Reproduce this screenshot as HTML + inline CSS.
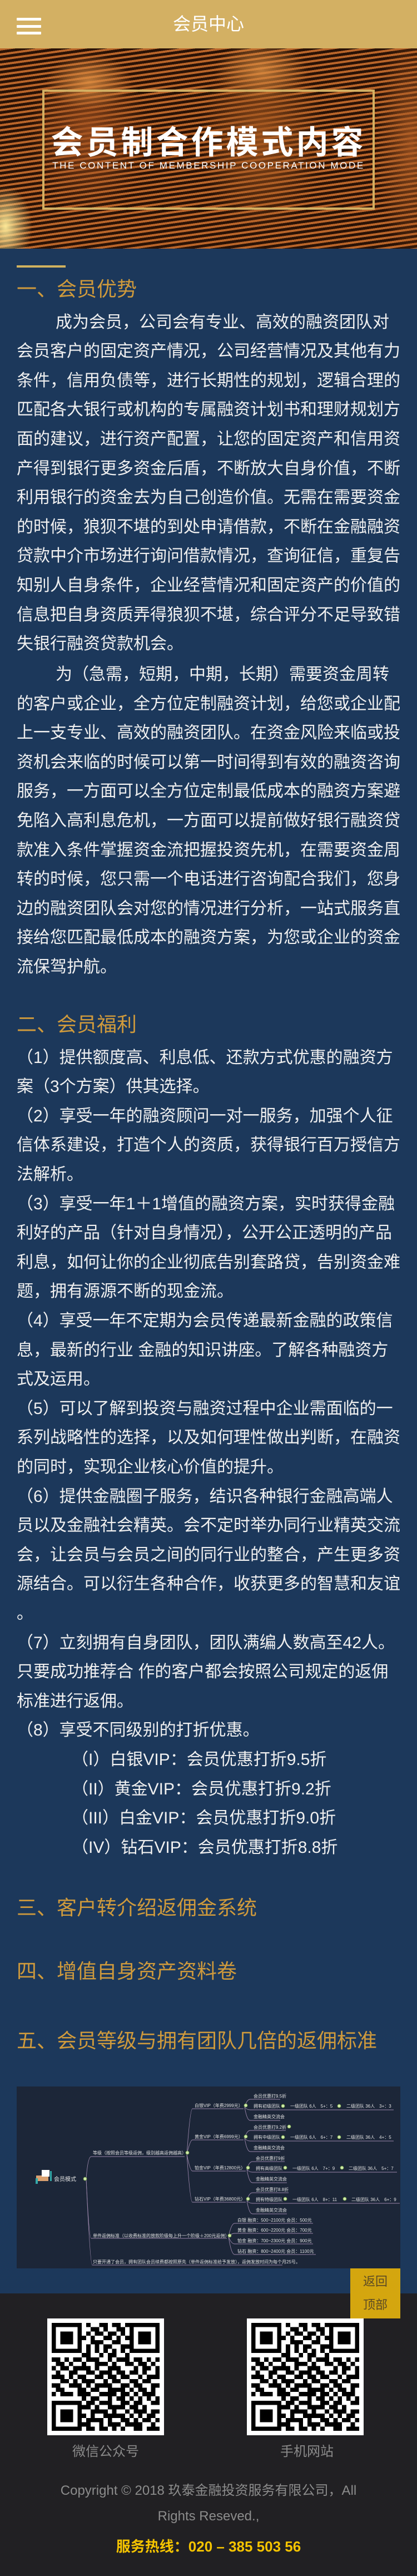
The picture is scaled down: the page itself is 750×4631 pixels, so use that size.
<!DOCTYPE html>
<html><head><meta charset="utf-8">
<style>
*{margin:0;padding:0;box-sizing:border-box}
html,body{width:750px;height:4631px;overflow:hidden;background:#1c385b;font-family:"Liberation Sans","Noto Sans CJK SC",sans-serif}
.hdr{position:absolute;left:0;top:0;width:750px;height:87px;background:#d3b063}
.hdr .t{position:absolute;left:0;width:750px;top:0;line-height:87px;text-align:center;color:#fff;font-size:32px}
.hb{position:absolute;left:30px;width:44px;height:5px;background:#fff;border-radius:1px}
.ban{position:absolute;left:0;top:87px;width:750px;height:360px;overflow:hidden;
background:
radial-gradient(ellipse 110px 70px at 160px 60px,rgba(230,150,70,.75),rgba(0,0,0,0) 70%),
radial-gradient(ellipse 120px 80px at 470px 40px,rgba(230,150,70,.7),rgba(0,0,0,0) 70%),
radial-gradient(ellipse 140px 200px at 160px 150px,rgba(160,80,30,.8),rgba(0,0,0,0) 75%),
radial-gradient(ellipse 150px 230px at 470px 160px,rgba(160,85,30,.85),rgba(0,0,0,0) 75%),
radial-gradient(ellipse 60px 90px at 10px 320px,rgba(250,230,150,1),rgba(0,0,0,0) 80%),
radial-gradient(ellipse 80px 260px at 740px 170px,rgba(170,90,35,.8),rgba(0,0,0,0) 80%),
repeating-linear-gradient(172deg,#b9652a 0 4px,#2a1206 4px 9px);}
.ban .frame{position:absolute;left:76px;top:74px;width:598px;height:216px;border:4px solid #d3b063}
.ban .tt{position:absolute;left:0;width:750px;top:135px;text-align:center;color:#fff;font-size:58px;font-weight:bold;letter-spacing:5px;line-height:70px}
.ban .st{position:absolute;left:0;width:750px;top:200px;text-align:center;color:#fff;font-size:17px;letter-spacing:2.6px;line-height:22px}
.gl{position:absolute;left:30px;top:477px;width:88px;height:4px;background:#d1b25f}
.h{position:absolute;left:30px;color:#cf9a3c;font-size:36px;line-height:50px;white-space:nowrap}
.p{position:absolute;left:30px;width:700px;color:#f0f0f0;font-size:30px;line-height:52.6px;white-space:nowrap}
.ind{padding-left:70px}
.vip{padding-left:99px}
.img{position:absolute;left:30px;top:3751px;width:690px;height:327px;background:#1c2638}
.foot{position:absolute;left:0;top:4123px;width:750px;height:508px;background:#212023}
.top{position:absolute;left:630px;top:4078px;width:90px;height:90px;background:#d4a60f;color:#5b4a25;font-size:22px;line-height:42px;text-align:center;padding-top:3px}
.qr{position:absolute;top:4168px;width:210px;height:210px}
.lab{position:absolute;top:4390px;width:300px;text-align:center;color:#8a8a8a;font-size:24px;line-height:36px}
.cp{position:absolute;left:0;width:750px;text-align:center;color:#8c8c8c;font-size:24px;line-height:46px;top:4455px}
.hot{position:absolute;left:0;width:750px;text-align:center;color:#f5c400;font-size:26px;line-height:40px;top:4558px;font-weight:bold}
</style></head><body>
<div class="hdr"><div class="hb" style="top:32px"></div><div class="hb" style="top:45px"></div><div class="hb" style="top:57px"></div><div class="t">会员中心</div></div>
<div class="ban"><div class="frame"></div><div class="tt">会员制合作模式内容</div><div class="st">THE CONTENT OF MEMBERSHIP COOPERATION MODE</div></div>
<div class="gl"></div>
<div class="h" style="top:495px">一、会员优势</div>
<div class="p" style="top:553.7px"><div class="ind">成为会员，公司会有专业、高效的融资团队对</div>会员客户的固定资产情况，公司经营情况及其他有力<br>条件，信用负债等，进行长期性的规划，逻辑合理的<br>匹配各大银行或机构的专属融资计划书和理财规划方<br>面的建议，进行资产配置，让您的固定资产和信用资<br>产得到银行更多资金后盾，不断放大自身价值，不断<br>利用银行的资金去为自己创造价值。无需在需要资金<br>的时候，狼狈不堪的到处申请借款，不断在金融融资<br>贷款中介市场进行询问借款情况，查询征信，重复告<br>知别人自身条件，企业经营情况和固定资产的价值的<br>信息把自身资质弄得狼狈不堪，综合评分不足导致错<br>失银行融资贷款机会。</div>
<div class="p" style="top:1187px"><div class="ind">为（急需，短期，中期，长期）需要资金周转</div>的客户或企业，全方位定制融资计划，给您或企业配<br>上一支专业、高效的融资团队。在资金风险来临或投<br>资机会来临的时候可以第一时间得到有效的融资咨询<br>服务，一方面可以全方位定制最低成本的融资方案避<br>免陷入高利息危机，一方面可以提前做好银行融资贷<br>款准入条件掌握资金流把握投资先机，在需要资金周<br>转的时候，您只需一个电话进行咨询配合我们，您身<br>边的融资团队会对您的情况进行分析，一站式服务直<br>接给您匹配最低成本的融资方案，为您或企业的资金<br>流保驾护航。</div>
<div class="h" style="top:1817px">二、会员福利</div>
<div class="p" style="top:1875.7px">（1）提供额度高、利息低、还款方式优惠的融资方<br>案（3个方案）供其选择。<br>（2）享受一年的融资顾问一对一服务，加强个人征<br>信体系建设，打造个人的资质，获得银行百万授信方<br>法解析。<br>（3）享受一年1＋1增值的融资方案，实时获得金融<br>利好的产品（针对自身情况），公开公正透明的产品<br>利息，如何让你的企业彻底告别套路贷，告别资金难<br>题，拥有源源不断的现金流。<br>（4）享受一年不定期为会员传递最新金融的政策信<br>息，最新的行业 金融的知识讲座。了解各种融资方<br>式及运用。<br>（5）可以了解到投资与融资过程中企业需面临的一<br>系列战略性的选择，以及如何理性做出判断，在融资<br>的同时，实现企业核心价值的提升。<br>（6）提供金融圈子服务，结识各种银行金融高端人<br>员以及金融社会精英。会不定时举办同行业精英交流<br>会，让会员与会员之间的同行业的整合，产生更多资<br>源结合。可以衍生各种合作，收获更多的智慧和友谊<br>。<br>（7）立刻拥有自身团队，团队满编人数高至42人。<br>只要成功推荐合 作的客户都会按照公司规定的返佣<br>标准进行返佣。<br>（8）享受不同级别的打折优惠。
<div class="vip">（I）白银VIP：会员优惠打折9.5折<br>（II）黄金VIP：会员优惠打折9.2折<br>（III）白金VIP：会员优惠打折9.0折<br>（IV）钻石VIP：会员优惠打折8.8折</div></div>
<div class="h" style="top:3405px">三、客户转介绍返佣金系统</div>
<div class="h" style="top:3519px">四、增值自身资产资料卷</div>
<div class="h" style="top:3644px">五、会员等级与拥有团队几倍的返佣标准</div>

<div class="img">
<svg width="690" height="327" viewBox="0 0 690 327" font-family="Liberation Sans,Noto Sans CJK SC,sans-serif" font-size="8" fill="#e2e2e2">
<g stroke="#9a86aa" stroke-width="0.9" fill="none">
<path d="M125 166 Q128 126 134 126 H302"/>
<path d="M125 166 Q130 273 134 273 H378"/>
<path d="M125 166 Q132 321 136 321 H478"/>
<path d="M306 122 Q312 40 316 40 H408"/>
<path d="M306 122 Q312 96 316 96 H408"/>
<path d="M306 122 Q312 152 316 152 H412"/>
<path d="M306 122 Q312 208 316 208 H412"/>
<path d="M410 37 Q414 23 420 23 H474"/><path d="M410 37 Q414 42 420 42 H678"/><path d="M410 37 Q414 61 420 61 H474"/>
<path d="M410 93 Q414 79 420 79 H484"/><path d="M410 93 Q414 98 420 98 H678"/><path d="M410 93 Q414 117 420 117 H474"/>
<path d="M414 149 Q418 135 424 135 H482"/><path d="M414 149 Q418 154 424 154 H684"/><path d="M414 149 Q418 173 424 173 H486"/>
<path d="M414 205 Q418 191 424 191 H489"/><path d="M414 205 Q418 210 424 210 H689"/><path d="M414 205 Q418 229 424 229 H486"/>
<path d="M381 270 Q386 246 392 246 H533"/><path d="M381 270 Q386 264 392 264 H533"/><path d="M381 270 Q386 283 392 283 H533"/><path d="M381 270 Q386 302 392 302 H538"/>
</g>
<g fill="#cfe8a8" stroke="#6a9a40" stroke-width="0.8">
<circle cx="123" cy="166" r="3"/><circle cx="307" cy="119" r="3"/><circle cx="383" cy="268" r="3"/>
<circle cx="412" cy="34" r="3"/><circle cx="479" cy="35" r="3"/><circle cx="580" cy="35" r="3"/>
<circle cx="412" cy="90" r="3"/><circle cx="490" cy="72" r="3"/><circle cx="479" cy="91" r="3"/><circle cx="580" cy="91" r="3"/>
<circle cx="416" cy="146" r="3"/><circle cx="483" cy="146" r="3"/><circle cx="585" cy="146" r="3"/>
<circle cx="416" cy="202" r="3"/><circle cx="483" cy="202" r="3"/><circle cx="590" cy="202" r="3"/>
</g>
<rect x="35" y="160" width="22" height="10" fill="#d9a070"/><rect x="45" y="150" width="14" height="12" fill="#fff"/><rect x="34" y="165" width="4" height="10" fill="#3aa"/><rect x="60" y="152" width="3" height="18" fill="#3aa"/>
<text x="67" y="170" font-size="10">会员模式</text>
<text x="137" y="122">等级（按照会员等级返佣，级别越高返佣越高）</text>
<text x="137" y="271">单件返佣标准（以收费标准的放款阶级每上升一个阶级＋200元返佣）</text>
<text x="137" y="318">只要开通了会员，拥有团队会员续费都按照原先（单件返佣标准给予发放），返佣发放时间为每个月25号。</text>
<text x="320" y="37">白银VIP（年费2999元）</text>
<text x="320" y="93">黄金VIP（年费6999元）</text>
<text x="320" y="149">铂金VIP（年费12800元）</text>
<text x="320" y="205">钻石VIP（年费36800元）</text>
<text x="426" y="20">会员优惠打9.5折</text><text x="426" y="38">拥有初级团队</text><text x="492" y="38">一级团队 6人　5+：5</text><text x="593" y="38">二级团队 36人　3+：3</text><text x="426" y="57">金融精英交流会</text>
<text x="426" y="76">会员优惠打9.2折</text><text x="426" y="94">拥有中级团队</text><text x="492" y="94">一级团队 6人　6+：7</text><text x="593" y="94">二级团队 36人　4+：5</text><text x="426" y="113">金融精英交流会</text>
<text x="430" y="132">会员优惠打9折</text><text x="430" y="150">拥有高级团队</text><text x="496" y="150">一级团队 6人　7+：9</text><text x="597" y="150">二级团队 36人　5+：7</text><text x="430" y="169">金融精英交流会</text>
<text x="430" y="188">会员优惠打8.8折</text><text x="430" y="206">拥有特级团队</text><text x="496" y="206">一级团队 6人　8+：11</text><text x="602" y="206">二级团队 36人　6+：9</text><text x="430" y="225">金融精英交流会</text>
<text x="397" y="243">白银 融资：500~2100元 会员：500元</text>
<text x="397" y="261">黄金 融资：600~2200元 会员：700元</text>
<text x="397" y="280">铂金 融资：700~2300元 会员：900元</text>
<text x="397" y="299">钻石 融资：800~2400元 会员：1100元</text>
</svg>
</div>

<div class="foot"></div>
<div class="top">返回<br>顶部</div>
<svg width="0" height="0" style="position:absolute"><defs><g id="q"><rect x="-1" y="-1" width="27" height="27" fill="#fff"/><path fill="#000" d="M0 0h7v1h-7zM8 0h1v1h-1zM11 0h2v1h-2zM14 0h2v1h-2zM17 0h8v1h-8zM0 1h1v1h-1zM6 1h1v1h-1zM9 1h2v1h-2zM12 1h1v1h-1zM15 1h2v1h-2zM18 1h1v1h-1zM24 1h1v1h-1zM0 2h1v1h-1zM2 2h3v1h-3zM6 2h1v1h-1zM8 2h1v1h-1zM10 2h2v1h-2zM13 2h2v1h-2zM16 2h1v1h-1zM18 2h1v1h-1zM20 2h3v1h-3zM24 2h1v1h-1zM0 3h1v1h-1zM2 3h3v1h-3zM6 3h2v1h-2zM9 3h1v1h-1zM12 3h2v1h-2zM15 3h1v1h-1zM17 3h2v1h-2zM20 3h3v1h-3zM24 3h1v1h-1zM0 4h1v1h-1zM2 4h3v1h-3zM6 4h1v1h-1zM9 4h3v1h-3zM14 4h2v1h-2zM18 4h1v1h-1zM20 4h3v1h-3zM24 4h1v1h-1zM0 5h1v1h-1zM6 5h1v1h-1zM8 5h1v1h-1zM10 5h1v1h-1zM12 5h2v1h-2zM16 5h3v1h-3zM24 5h1v1h-1zM0 6h7v1h-7zM8 6h1v1h-1zM10 6h1v1h-1zM12 6h1v1h-1zM14 6h1v1h-1zM16 6h1v1h-1zM18 6h7v1h-7zM7 7h2v1h-2zM11 7h1v1h-1zM13 7h2v1h-2zM17 7h1v1h-1zM0 8h2v1h-2zM3 8h1v1h-1zM5 8h2v1h-2zM8 8h3v1h-3zM13 8h1v1h-1zM15 8h3v1h-3zM19 8h2v1h-2zM22 8h1v1h-1zM24 8h1v1h-1zM1 9h2v1h-2zM4 9h1v1h-1zM7 9h1v1h-1zM10 9h3v1h-3zM14 9h1v1h-1zM17 9h2v1h-2zM20 9h2v1h-2zM23 9h1v1h-1zM0 10h1v1h-1zM2 10h2v1h-2zM5 10h4v1h-4zM10 10h1v1h-1zM13 10h3v1h-3zM19 10h1v1h-1zM21 10h2v1h-2zM24 10h1v1h-1zM1 11h1v1h-1zM4 11h2v1h-2zM8 11h2v1h-2zM11 11h3v1h-3zM15 11h2v1h-2zM18 11h2v1h-2zM21 11h1v1h-1zM24 11h1v1h-1zM0 12h3v1h-3zM4 12h1v1h-1zM6 12h2v1h-2zM10 12h2v1h-2zM13 12h2v1h-2zM16 12h2v1h-2zM20 12h1v1h-1zM22 12h3v1h-3zM2 13h2v1h-2zM5 13h1v1h-1zM7 13h3v1h-3zM12 13h1v1h-1zM14 13h2v1h-2zM18 13h2v1h-2zM21 13h2v1h-2zM0 14h2v1h-2zM4 14h3v1h-3zM8 14h1v1h-1zM10 14h4v1h-4zM16 14h2v1h-2zM19 14h2v1h-2zM23 14h2v1h-2zM1 15h2v1h-2zM6 15h2v1h-2zM9 15h2v1h-2zM13 15h4v1h-4zM18 15h1v1h-1zM20 15h2v1h-2zM23 15h1v1h-1zM0 16h1v1h-1zM2 16h3v1h-3zM6 16h3v1h-3zM11 16h4v1h-4zM16 16h2v1h-2zM19 16h1v1h-1zM21 16h3v1h-3zM7 17h1v1h-1zM9 17h2v1h-2zM13 17h1v1h-1zM15 17h2v1h-2zM18 17h1v1h-1zM20 17h1v1h-1zM22 17h1v1h-1zM24 17h1v1h-1zM0 18h7v1h-7zM8 18h2v1h-2zM11 18h3v1h-3zM16 18h2v1h-2zM19 18h2v1h-2zM23 18h2v1h-2zM0 19h1v1h-1zM6 19h3v1h-3zM10 19h1v1h-1zM13 19h4v1h-4zM18 19h2v1h-2zM21 19h1v1h-1zM0 20h1v1h-1zM2 20h3v1h-3zM6 20h1v1h-1zM9 20h4v1h-4zM14 20h1v1h-1zM17 20h1v1h-1zM19 20h3v1h-3zM23 20h2v1h-2zM0 21h1v1h-1zM2 21h3v1h-3zM6 21h2v1h-2zM9 21h1v1h-1zM12 21h5v1h-5zM18 21h1v1h-1zM20 21h1v1h-1zM22 21h2v1h-2zM0 22h1v1h-1zM2 22h3v1h-3zM6 22h1v1h-1zM8 22h4v1h-4zM13 22h1v1h-1zM16 22h2v1h-2zM19 22h1v1h-1zM21 22h2v1h-2zM24 22h1v1h-1zM0 23h1v1h-1zM6 23h3v1h-3zM11 23h1v1h-1zM13 23h3v1h-3zM17 23h4v1h-4zM23 23h1v1h-1zM0 24h7v1h-7zM8 24h2v1h-2zM11 24h2v1h-2zM14 24h1v1h-1zM16 24h1v1h-1zM19 24h2v1h-2zM22 24h3v1h-3z"/></g></defs></svg>
<svg class="qr" style="left:85px" viewBox="-1 -1 27 27" shape-rendering="crispEdges"><use href="#q"/></svg>
<svg class="qr" style="left:444px" viewBox="-1 -1 27 27" shape-rendering="crispEdges"><use href="#q"/></svg>
<div class="lab" style="left:40px">微信公众号</div>
<div class="lab" style="left:402px">手机网站</div>
<div class="cp">Copyright © 2018 玖泰金融投资服务有限公司，All<br>Rights Reseved.,</div>
<div class="hot">服务热线：020 – 385 503 56</div>
</body></html>
